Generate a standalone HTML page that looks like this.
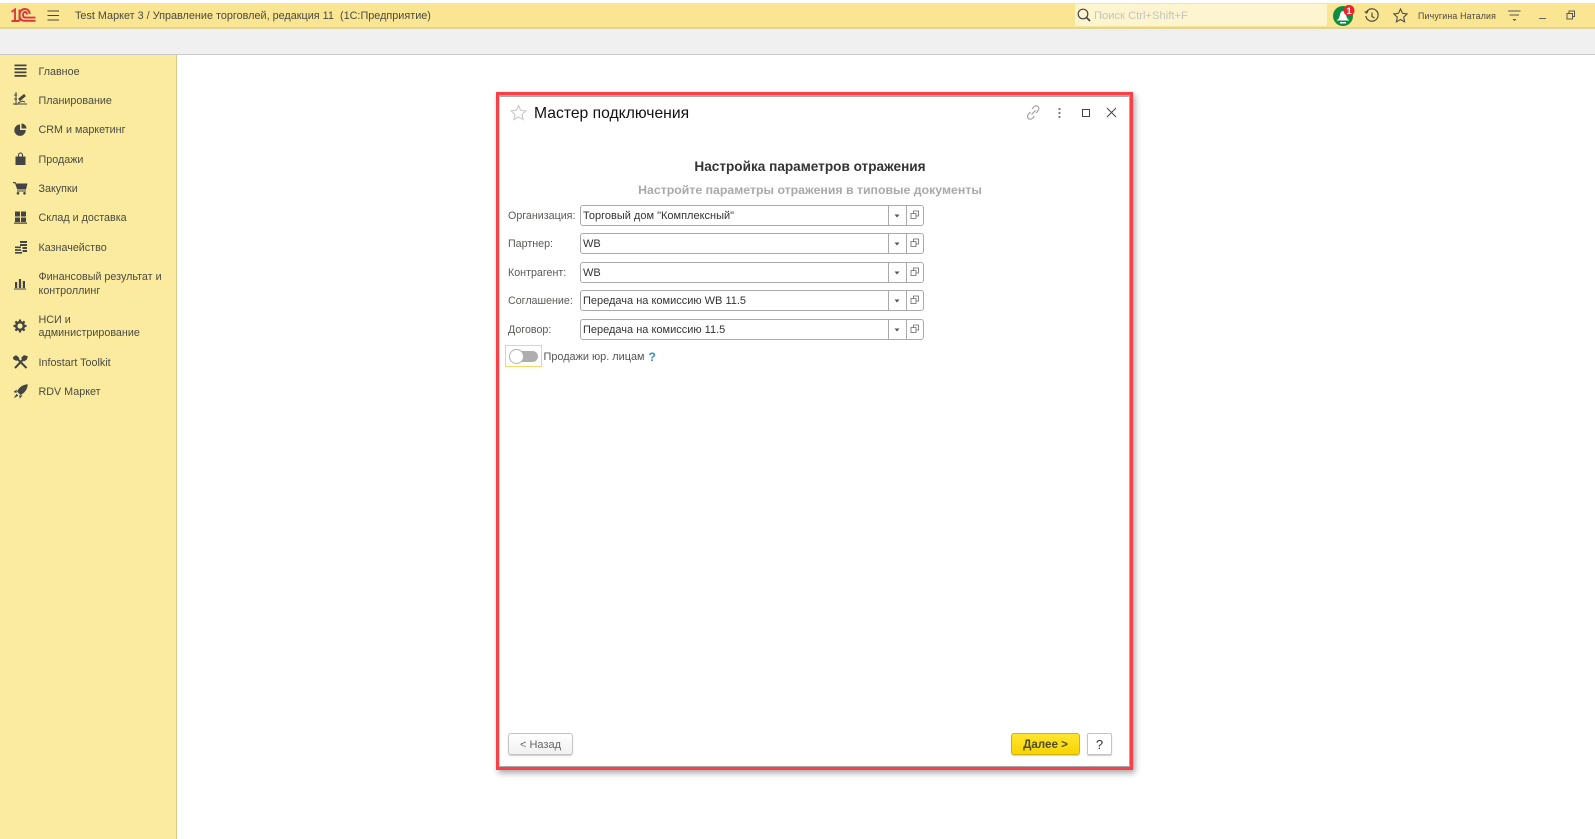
<!DOCTYPE html>
<html><head><meta charset="utf-8">
<style>
html,body{margin:0;padding:0;background:#fff}
#p{position:relative;width:1595px;height:839px;overflow:hidden;background:#fff;font-family:"Liberation Sans",sans-serif;filter:blur(.3px)}
#p div,#p svg{position:absolute}
.t{white-space:nowrap;line-height:14px;height:14px}
.s{left:38.5px;font-size:10.75px;color:#4a4a42}
.l{left:508px;font-size:10.7px;color:#5a5a55}
.f{left:580px;width:342px;height:19px;border:1px solid #aaa;border-radius:3px;background:#fff}
.v{left:583px;font-size:11px;color:#333}
.sep{width:1px;height:21px;background:#aaa}
</style></head><body><div id="p">
<!-- top -->
<div style="left:0;top:3px;width:1595px;height:25px;background:#fae592"></div>
<div style="left:0;top:0;width:1595px;height:3px;background:#fff"></div>
<div style="left:0;top:27px;width:1595px;height:2px;background:#dfd59a"></div>
<div style="left:0;top:29px;width:1595px;height:25px;background:#f0f0f0"></div>
<div style="left:0;top:54px;width:1595px;height:1px;background:#c8c8c8"></div>
<!-- sidebar -->
<div style="left:0;top:55px;width:176px;height:784px;background:#fbeb9f"></div>
<div style="left:176px;top:55px;width:1px;height:784px;background:#d8cc80"></div>
<!-- logo -->
<svg style="left:10px;top:7px" width="27" height="16" viewBox="0 0 27 16" fill="none" stroke="#e0353a" stroke-width="1.900"><path d="M1.500 5L5 2.500V14M9.500 14V2.500M9.500 14H1.500"/><path d="M25.500 13.800H14.500C11 13.800 9.500 11 9.500 8S11.500 2 15 2 19.500 5 19.800 7"/><path d="M25.500 10.600H15.500C14 10.600 13 9.800 13 8S14 5 15.200 5 17 6 17 7.500"/></svg>
<svg style="left:46px;top:10px" width="14" height="11" viewBox="0 0 14 11" fill="none" stroke="#444" stroke-width="1.100"><path d="M1.500 1H13M1.500 5.500H13M1.500 10H13"/></svg>
<div class="t" style="left:75px;top:8.500px;font-size:10.85px;color:#4a4a42">Test Маркет 3 / Управление торговлей, редакция 11&nbsp; (1С:Предприятие)</div>
<!-- search -->
<div style="left:1075px;top:4px;width:252px;height:22px;background:#fdf5cf;border-radius:2px"></div>
<svg style="left:1077px;top:8px" width="14" height="14" viewBox="0 0 14 14" fill="none" stroke="#444" stroke-width="1.200"><circle cx="6" cy="6" r="4.800"/><path d="M9.500 9.500L13 13" stroke-width="1.600"/></svg>
<div class="t" style="left:1094px;top:9px;font-size:11.2px;color:#c4c4bd">Поиск Ctrl+Shift+F</div>
<!-- bell -->
<svg style="left:1332px;top:3.500px" width="26" height="25" viewBox="0 0 26 25"><circle cx="11" cy="12" r="10" fill="#0b8f3e"/><path d="M4.500 16.500c2.500-1.500 3-3.500 3.500-6 .4-2 1.500-3.500 3-3.500s2.600 1.500 3 3.500c.5 2.500 1 4.500 3.500 6z" fill="#fff"/><path d="M8 18h6v1.500H8z" fill="#fff"/><circle cx="17" cy="6.500" r="5.500" fill="#e8262c"/><text x="17" y="10" font-size="9.500" font-weight="700" fill="#fff" text-anchor="middle" font-family="Liberation Sans">1</text></svg>
<!-- history -->
<svg style="left:1364px;top:8px" width="16" height="16" viewBox="0 0 16 16" fill="none" stroke="#4c4c46" stroke-width="1.200"><path d="M2.500 4A6.200 6.200 0 1 1 1.800 8"/><path d="M.8 3.500l1.800 1.500 1.500-1.800"/><path d="M8 4.500V8.500L10.500 10"/></svg>
<!-- star -->
<svg style="left:1393px;top:8px" width="15" height="15" viewBox="0 0 15 15" fill="none" stroke="#4c4c46" stroke-width="1.100"><path d="M7.500 1l2 4.300 4.700.6-3.500 3.200.9 4.700-4.100-2.300-4.100 2.300.9-4.700L.8 5.900l4.700-.6z"/></svg>
<div class="t" style="left:1418px;top:8.500px;font-size:8.800px;color:#4a4a42;letter-spacing:.02em">Пичугина Наталия</div>
<svg style="left:1508px;top:10px" width="13" height="12" viewBox="0 0 13 12" fill="none" stroke="#555" stroke-width="1"><path d="M0 1H12.500M1.500 5H11"/><path d="M4.500 9h4l-2 2z" fill="#555" stroke="none"/></svg>
<div style="left:1539px;top:18px;width:7px;height:1px;background:#666"></div>
<svg style="left:1566px;top:10px" width="10" height="10" viewBox="0 0 10 10" fill="none" stroke="#555" stroke-width="1"><path d="M1 3.500h5.500v5.500H1zM3 3.500V1h5.500v5.500H6.500"/></svg>
<!-- sidebar icons -->
<svg style="left:13.500px;top:64px" width="13" height="14" viewBox="0 0 13 14" fill="#444"><path d="M.5 .5h12v1.700H.5zM.5 4h12v1.700H.5zM.5 7.500h12v1.700H.5zM.5 11h12v1.700H.5z"/></svg>
<svg style="left:13px;top:92px" width="15" height="15" viewBox="0 0 15 15" fill="none" stroke="#444" stroke-width="1"><path d="M3 0v13M0 12h14M1 3h3M1 7h3"/><path d="M6 8l6-5" stroke-width="2.800"/><path d="M5 11l4-2 3 1"/></svg>
<svg style="left:13.500px;top:122.500px" width="13" height="13" viewBox="0 0 13 13" fill="#444"><path d="M6 1.500V7h5.700A5.700 5.700 0 1 1 6 1.500z"/><path d="M7.500 .5A5 5 0 0 1 12.500 5.500H7.500z"/></svg>
<svg style="left:13.500px;top:152px" width="13" height="14" viewBox="0 0 13 14" fill="#444"><path d="M1.500 4.500h10v8.500h-10z"/><path d="M4.500 5V3a2 2 0 0 1 4 0v2" fill="none" stroke="#444" stroke-width="1.100"/></svg>
<svg style="left:12.500px;top:181px" width="15" height="14" viewBox="0 0 15 14" fill="#444"><path d="M0 1h2.500l.6 1.500H14.500l-1.500 6H4.200L2 2.200H0z"/><path d="M4 9.500h9v1H4z"/><circle cx="5" cy="12.300" r="1.300"/><circle cx="11.500" cy="12.300" r="1.300"/></svg>
<svg style="left:13.500px;top:211px" width="13" height="13" viewBox="0 0 13 13" fill="#444"><path d="M1 .5h5v5H1zM7 .5h5v5H7zM1 6.500h5v4.500H1zM7 6.500h5v4.500H7zM0 11.500h13v1.300H0z"/></svg>
<svg style="left:13.500px;top:240px" width="14" height="14" viewBox="0 0 14 14" fill="#444"><path d="M6 1h7v2H6zM6 4h7v2H6zM1 6.500h6v1.600H1zM8.500 7h4.500v2H8.500zM1 9.300h6v1.600H1zM8.500 10h4.500v2H8.500zM1 12h7v1.600H1z"/></svg>
<svg style="left:14px;top:278px" width="12" height="12" viewBox="0 0 12 12" fill="#444"><path d="M1 4h2.200v6H1zM4.900 1h2.200v9H4.900zM8.800 3h2.200v7H8.800zM0 10.500h12v1H0z"/></svg>
<svg style="left:13px;top:319px" width="14" height="14" viewBox="0 0 14 14"><circle cx="7" cy="7" r="3.800" fill="none" stroke="#444" stroke-width="2.400"/><path d="M7 0.500V13.500M.5 7H13.500M2.400 2.400l9.200 9.200M11.600 2.400l-9.200 9.200" stroke="#444" stroke-width="2.200" stroke-dasharray="2.300 8.700" fill="none"/></svg>
<svg style="left:13px;top:355px" width="15" height="15" viewBox="0 0 15 15" fill="none" stroke="#444" stroke-width="2"><path d="M2 13L11 3.500M13.500 13L4 3.500"/><path d="M0 2.500l3-2 3 2.500-2.500 2.500-2.500-1zM8.500 3l2.500-2.500 3.500 1-1 3-2.500 1.500z" fill="#444" stroke-width=".6"/></svg>
<svg style="left:13px;top:384px" width="15" height="15" viewBox="0 0 15 15" fill="#444"><path d="M14.800 .2C9.500 .5 6 3.500 4 7.500l3.500 3.500c4-2 7-5.500 7.300-10.800zM3.800 5.500L.5 8l3 1zM9.500 11.200L7 14.500l-1-3zM3.500 9.800l1.800 1.800L.8 14.300z"/></svg>
<!-- sidebar text -->
<div class="t s" style="top:65px">Главное</div>
<div class="t s" style="top:94px">Планирование</div>
<div class="t s" style="top:123px">CRM и маркетинг</div>
<div class="t s" style="top:153px">Продажи</div>
<div class="t s" style="top:182px">Закупки</div>
<div class="t s" style="top:211px">Склад и доставка</div>
<div class="t s" style="top:241px">Казначейство</div>
<div class="t s" style="top:270px">Финансовый результат и</div>
<div class="t s" style="top:284px">контроллинг</div>
<div class="t s" style="top:313px">НСИ и</div>
<div class="t s" style="top:326px">администрирование</div>
<div class="t s" style="top:356px">Infostart Toolkit</div>
<div class="t s" style="top:385px">RDV Маркет</div>
<!-- window -->
<div style="left:496px;top:92px;width:631px;height:672px;border:3px solid #fa4046;box-shadow:2px 3px 6px rgba(0,0,0,.35)"></div>
<div style="left:499px;top:95px;width:631px;height:672px;box-sizing:border-box;border:1px solid #aaa;border-top:2px solid #aaa;border-left:1px solid #ddd"></div>
<svg style="left:510px;top:104px" width="17" height="17" viewBox="0 0 17 17" fill="none" stroke="#c8c8c8" stroke-width="1.100"><path d="M8.500 1.500l2.200 4.800 5.200.6-3.900 3.500 1.100 5.200-4.600-2.600-4.600 2.600 1.100-5.200L1.100 6.900l5.200-.6z"/></svg>
<div class="t" style="left:534px;top:103.500px;height:19px;line-height:19px;font-size:15.7px;color:#111">Мастер подключения</div>
<svg style="left:1026px;top:105px" width="15" height="15" viewBox="0 0 15 15" fill="none" stroke="#9a9a9a" stroke-width="1.100"><path d="M6 4l2-2.300a2.800 2.800 0 0 1 4.200 3.800L10 8M8.500 11l-2 2.300a2.800 2.800 0 0 1-4.200-3.800L4.500 7M5.500 9.500l4-4"/></svg>
<svg style="left:1057px;top:107px" width="5" height="12" viewBox="0 0 5 12" fill="#777"><circle cx="2.500" cy="2" r="1.100"/><circle cx="2.500" cy="6" r="1.100"/><circle cx="2.500" cy="10" r="1.100"/></svg>
<div style="left:1082px;top:109px;width:6px;height:6px;border:1.200px solid #444"></div>
<svg style="left:1106px;top:107px" width="11" height="11" viewBox="0 0 11 11" fill="none" stroke="#444" stroke-width="1"><path d="M1 1l9 9M10 1l-9 9"/></svg>
<div class="t" style="left:499px;width:622px;text-align:center;top:160px;font-size:13.600px;font-weight:700;color:#333">Настройка параметров отражения</div>
<div class="t" style="left:499px;width:622px;text-align:center;top:183px;font-size:12.300px;font-weight:700;color:#a9a9a9">Настройте параметры отражения в типовые документы</div>
<!-- labels -->
<div class="t l" style="top:209px">Организация:</div>
<div class="t l" style="top:237px">Партнер:</div>
<div class="t l" style="top:266px">Контрагент:</div>
<div class="t l" style="top:294px">Соглашение:</div>
<div class="t l" style="top:323px">Договор:</div>
<!-- fields -->
<div class="f" style="top:205px"></div><div class="sep" style="left:888px;top:205px"></div><div class="sep" style="left:906px;top:205px"></div>
<div class="f" style="top:233px"></div><div class="sep" style="left:888px;top:233px"></div><div class="sep" style="left:906px;top:233px"></div>
<div class="f" style="top:262px"></div><div class="sep" style="left:888px;top:262px"></div><div class="sep" style="left:906px;top:262px"></div>
<div class="f" style="top:290px"></div><div class="sep" style="left:888px;top:290px"></div><div class="sep" style="left:906px;top:290px"></div>
<div class="f" style="top:319px"></div><div class="sep" style="left:888px;top:319px"></div><div class="sep" style="left:906px;top:319px"></div>
<div class="t v" style="top:209px">Торговый дом "Комплексный"</div>
<div class="t v" style="top:237px">WB</div>
<div class="t v" style="top:266px">WB</div>
<div class="t v" style="top:294px">Передача на комиссию WB 11.5</div>
<div class="t v" style="top:323px">Передача на комиссию 11.5</div>
<!-- dropdown + open icons -->
<svg style="left:880px;top:205.500px" width="40" height="135" viewBox="0 0 40 135"><g id="a"><path d="M14.500 8.500h5l-2.500 3z" fill="#555"/><path d="M33.500 7.500v-2.500h5v5h-2M31 7.500h5v5h-5z" fill="#fff" stroke="#666" stroke-width=".8"/></g><use href="#a" y="28"/><use href="#a" y="57"/><use href="#a" y="85"/><use href="#a" y="114"/></svg>
<!-- toggle -->
<div style="left:505px;top:345px;width:35px;height:20px;border:1px solid #f5d868"></div>
<div style="left:511px;top:351px;width:27px;height:11px;border-radius:6px;background:#aeaeae"></div>
<div style="left:509px;top:349px;width:13px;height:13px;border-radius:50%;background:#fff;border:1px solid #b0b0b0"></div>
<div class="t" style="left:543.500px;top:350px;font-size:10.900px;color:#555">Продажи юр. лицам</div>
<div class="t" style="left:648.500px;top:349.500px;font-size:12px;font-weight:700;color:#3a8fc4">?</div>
<!-- buttons -->
<div style="left:508px;top:733px;width:63px;height:20px;border:1px solid #c4c4c4;border-radius:3px;background:linear-gradient(#fff,#f0f0f0);box-shadow:0 1px 1px #ccc;color:#666;font-size:11px;line-height:22px;text-align:center">&lt; Назад</div>
<div style="left:1011px;top:733px;width:67px;height:20px;border:1px solid #d0b400;border-radius:3px;background:linear-gradient(#ffe530,#f7d400);box-shadow:0 1px 1px #ccc;color:#4f4a20;font-size:11.600px;font-weight:700;line-height:21px;text-align:center">Далее &gt;</div>
<div style="left:1087px;top:733px;width:23px;height:20px;border:1px solid #c4c4c4;border-radius:2px;background:#fff;box-shadow:0 1px 1px #ccc;color:#333;font-size:13px;line-height:21px;text-align:center">?</div>
</div></body></html>
